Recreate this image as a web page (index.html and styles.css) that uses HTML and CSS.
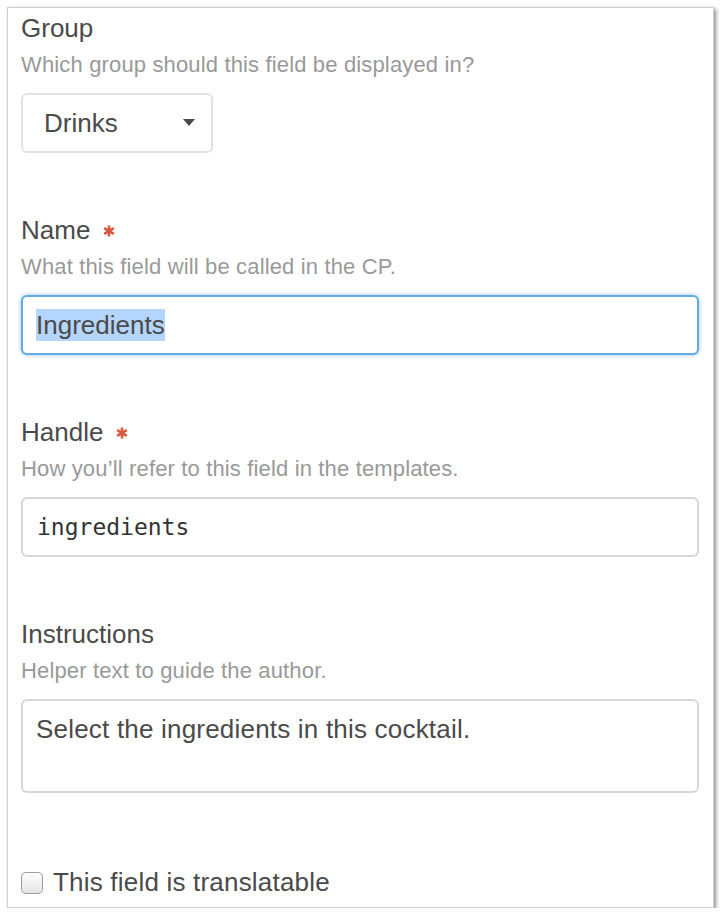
FILE: index.html
```html
<!DOCTYPE html>
<html lang="en">
<head>
    <meta charset="UTF-8">
    <title>Field Settings</title>
    <link rel="stylesheet" href="styles.css">
</head>
<body>
    <div class="panel">
        <div class="field">
            <div class="label">Group</div>
            <div class="instructions">Which group should this field be displayed in?</div>
            <div class="select">
                <span>Drinks</span>
                <span class="caret"></span>
            </div>
        </div>

        <div class="field">
            <div class="label">Name
                <svg class="required" viewBox="0 0 12 12"><path d="M6 0.5V11.5M1.2 3.2L10.8 8.8M1.2 8.8L10.8 3.2"/></svg>
            </div>
            <div class="instructions">What this field will be called in the CP.</div>
            <div class="text focus"><span class="selected">Ingredients</span></div>
        </div>

        <div class="field">
            <div class="label">Handle
                <svg class="required" viewBox="0 0 12 12"><path d="M6 0.5V11.5M1.2 3.2L10.8 8.8M1.2 8.8L10.8 3.2"/></svg>
            </div>
            <div class="instructions">How you’ll refer to this field in the templates.</div>
            <input class="text code" type="text" value="ingredients">
        </div>

        <div class="field">
            <div class="label">Instructions</div>
            <div class="instructions">Helper text to guide the author.</div>
            <textarea class="text area">Select the ingredients in this cocktail.</textarea>
        </div>

        <label class="checkbox"><input type="checkbox">This field is translatable</label>
    </div>
</body>
</html>
```

FILE: styles.css
```css
body {
    margin: 0;
    padding: 7px 0 0 7px;
    background-color: #fff;
    font-family: "Liberation Sans", Arial, sans-serif;
}

.panel {
    box-sizing: border-box;
    width: 707px;
    height: 901px;
    border: 1px solid #cfcfcf;
    padding: 5px 14px 0 13px;
    background-color: #fff;
    box-shadow: 2px 2px 4px rgba(0, 0, 0, 0.45);
}

.field {
    margin-bottom: 62px;
}

.label {
    display: flex;
    align-items: center;
    font-size: 26px;
    line-height: 30px;
    color: #4a4a4a;
}

.required {
    width: 12px;
    height: 12px;
    margin: 2px 0 0 13px;
    fill: none;
    stroke: #d9573f;
    stroke-width: 2.6;
}

.instructions {
    margin-top: 8px;
    font-size: 22px;
    letter-spacing: 0.15px;
    line-height: 28px;
    color: #999;
}

.select {
    box-sizing: border-box;
    display: flex;
    align-items: center;
    width: 192px;
    height: 60px;
    margin-top: 14px;
    padding: 0 16px 0 21px;
    border: 2px solid #e2e2e2;
    border-radius: 6px;
    font-size: 26px;
    color: #4a4a4a;
}

.caret {
    margin-left: auto;
    margin-top: -2px;
    border-left: 6px solid transparent;
    border-right: 6px solid transparent;
    border-top: 7px solid #4a4a4a;
}

.text {
    display: block;
    box-sizing: border-box;
    width: 100%;
    height: 60px;
    margin: 14px 0 0;
    padding: 0 13px;
    border: 2px solid #d6d6d6;
    border-radius: 6px;
    background-color: #fff;
    font-family: "Liberation Sans", Arial, sans-serif;
    font-size: 26px;
    letter-spacing: 0.2px;
    color: #4a4a4a;
    outline: none;
}

.focus {
    display: flex;
    align-items: center;
    border-color: #66abe0;
    box-shadow: 0 0 4px rgba(102, 171, 224, 0.7);
}

.selected {
    background-color: #b4d5fe;
    line-height: 32px;
    letter-spacing: 0;
}

.code {
    padding-left: 14px;
    font-family: "DejaVu Sans Mono", Menlo, monospace;
    font-size: 23px;
    letter-spacing: 0;
    color: #333;
}

.area {
    height: 94px;
    padding-top: 13px;
    line-height: 30px;
    resize: none;
}

.checkbox {
    display: flex;
    align-items: center;
    gap: 10px;
    margin-top: 74px;
    font-size: 26px;
    letter-spacing: 0.2px;
    line-height: 30px;
    color: #4a4a4a;
}

.checkbox input {
    appearance: none;
    width: 22px;
    height: 22px;
    margin: 1px 0 0;
    border: 1px solid #9c9c9c;
    border-radius: 5px;
    background: linear-gradient(#fdfdfd, #e4e4e4);
    box-shadow: inset 0 1px 1px rgba(255, 255, 255, 0.8);
}
```
